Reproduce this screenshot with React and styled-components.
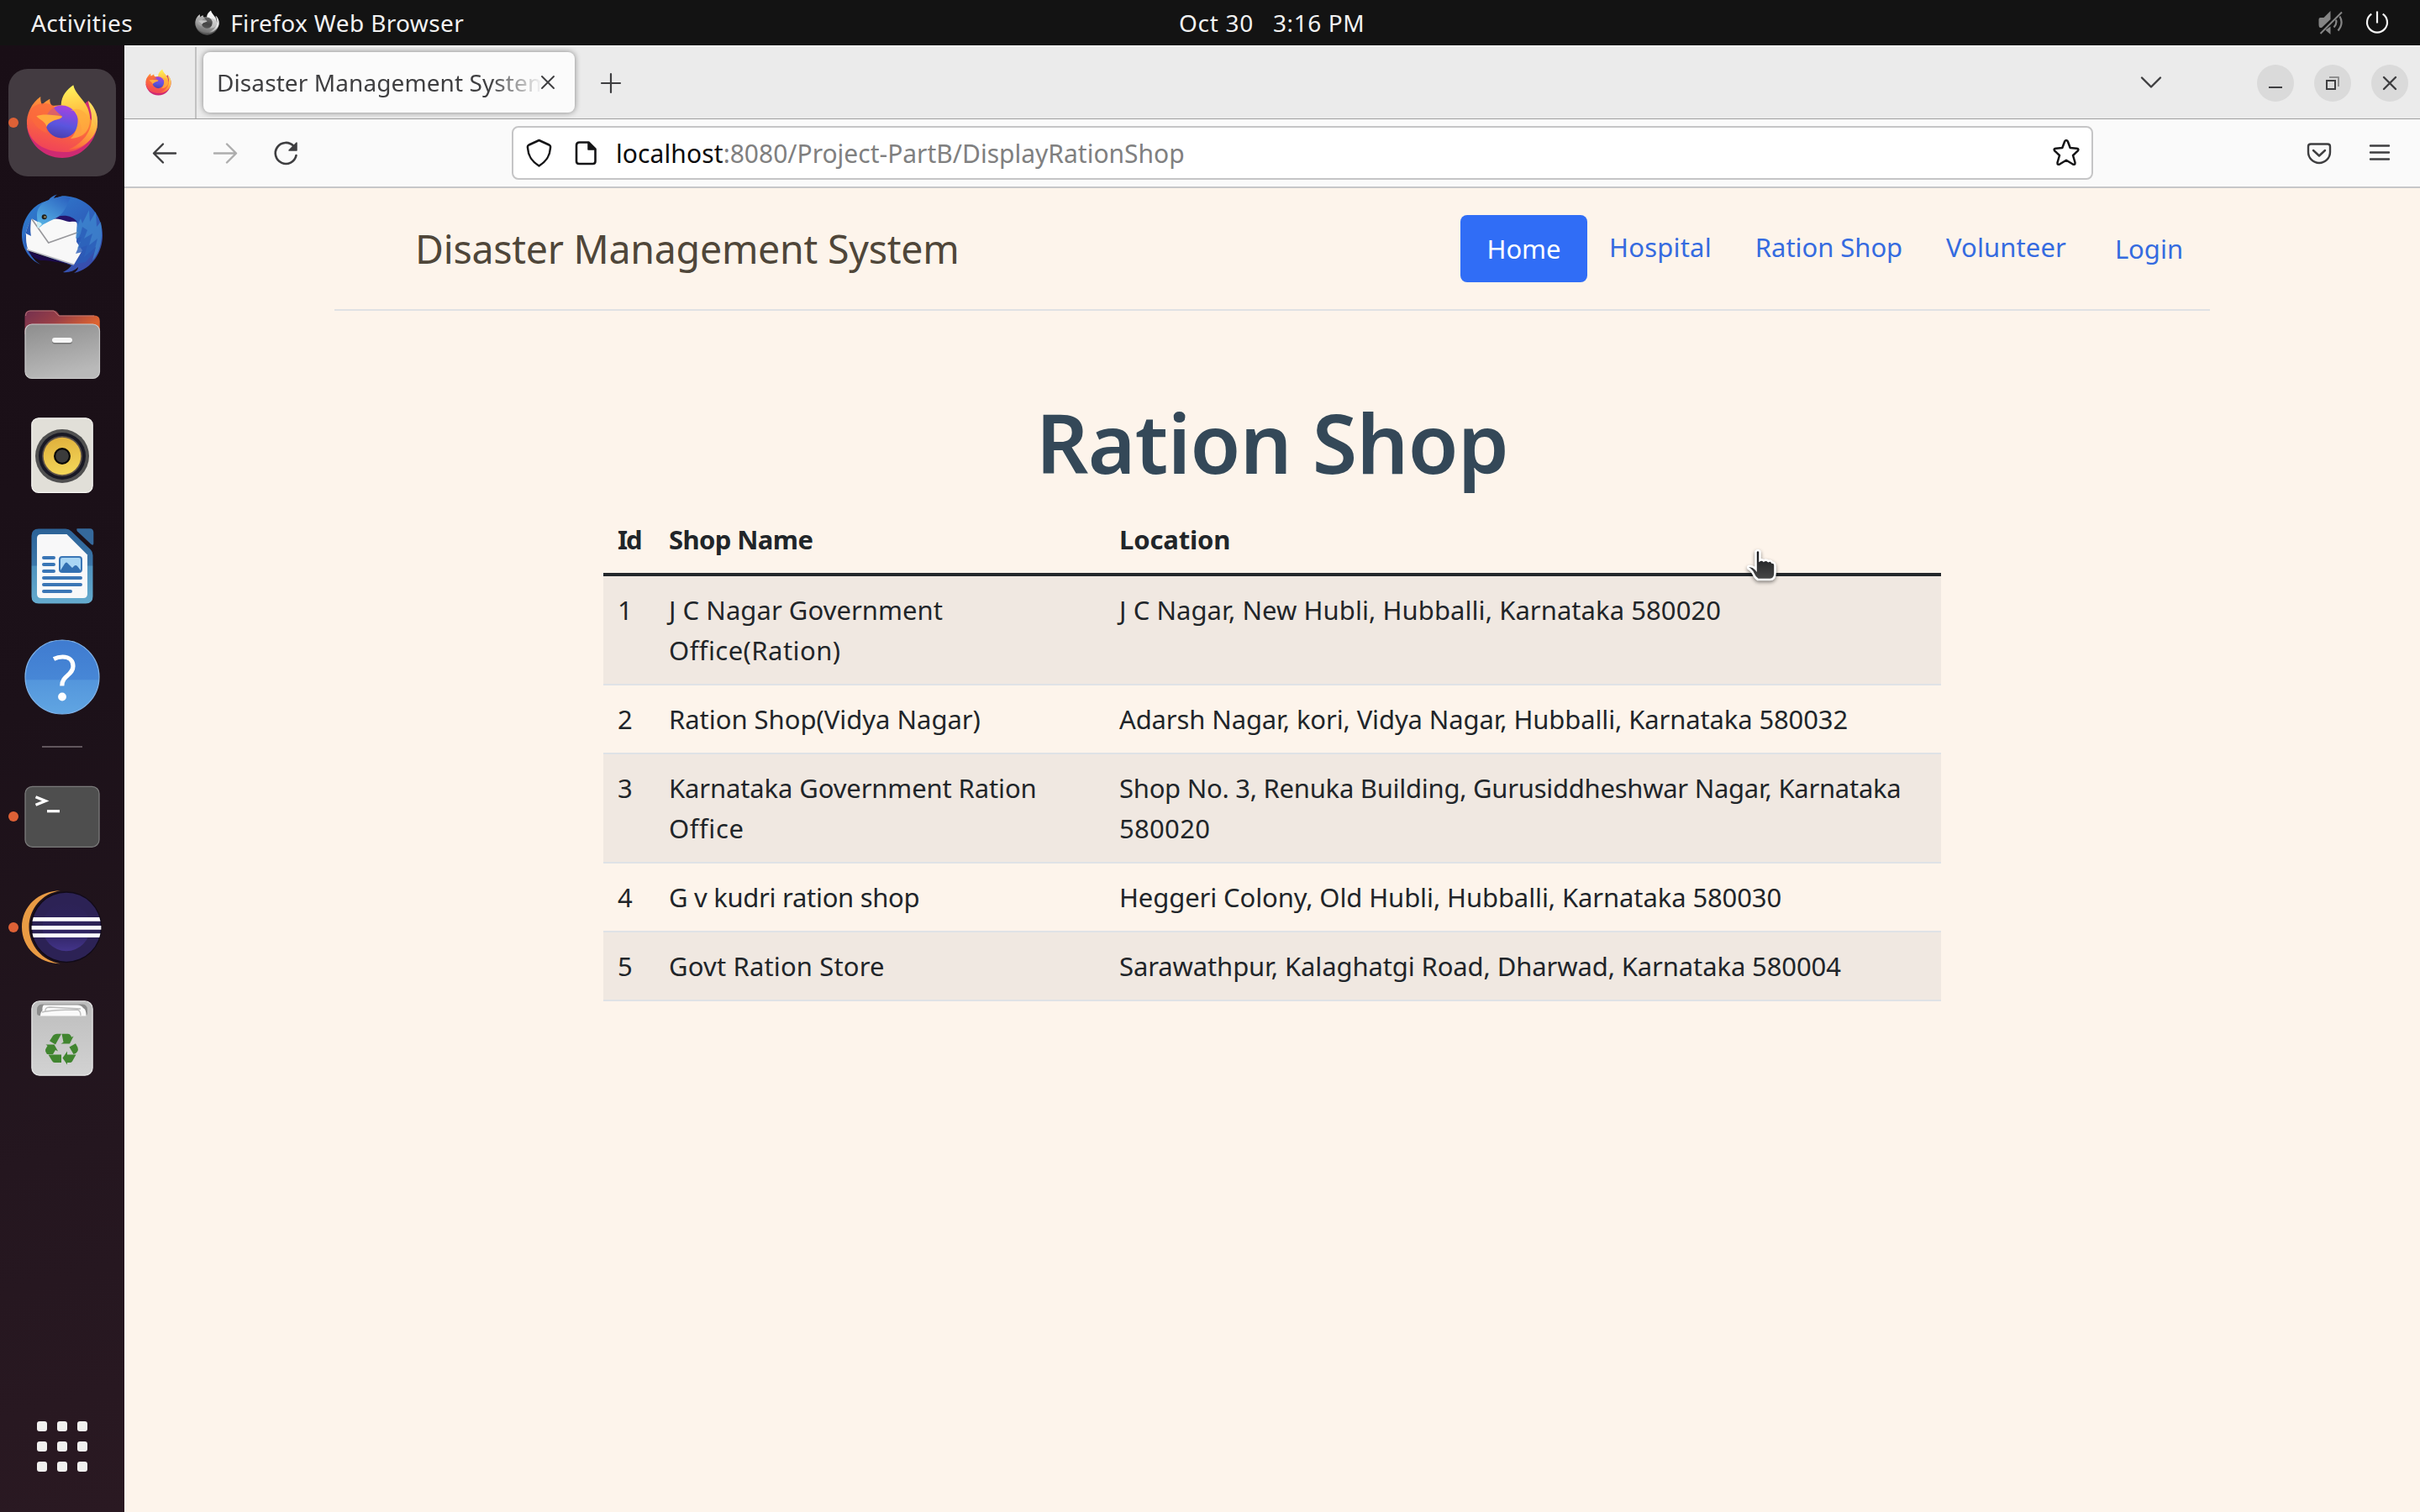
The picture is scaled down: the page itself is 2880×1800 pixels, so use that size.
import React from "react";
import styled, { createGlobalStyle } from "styled-components";

const GlobalStyle = createGlobalStyle`
  * { box-sizing: border-box; }
  html, body { margin: 0; padding: 0; }
  body {
    font-family: "Noto Sans", "Open Sans", sans-serif;
    background: #fdf4eb;
    overflow: hidden;
  }
  svg { display: block; flex: none; }
`;

/* ---------- desktop ---------- */

const Desktop = styled.div`
  width: 2880px;
  height: 1800px;
  display: flex;
  flex-direction: column;
  overflow: hidden;
`;

const TopBar = styled.header`
  flex: none;
  height: 54px;
  background: #131313;
  color: #f2f2f2;
  display: grid;
  grid-template-columns: 1403px auto 1fr;
  align-items: center;
  font-size: 28px;
  line-height: 50px;
  white-space: pre;
`;

const TopLeft = styled.div`
  display: flex;
  align-items: center;
  padding-left: 37px;
`;

const TopRight = styled.div`
  display: flex;
  align-items: center;
  justify-content: flex-end;
  gap: 26px;
  padding-right: 36px;
`;

const Clock = styled.div`
  display: flex;
  gap: 23px;
`;

const Tracked = styled.span`
  letter-spacing: ${(p) => p.$track || 0}px;
  white-space: nowrap;
`;

const ActiveApp = styled.div`
  display: flex;
  align-items: center;
  gap: 12px;
  margin-left: 73px;
`;

const Body = styled.div`
  flex: 1;
  display: flex;
  min-height: 0;
`;

/* ---------- dock ---------- */

const Dock = styled.nav`
  flex: none;
  width: 148px;
  padding: 28px 10px 14px;
  background: linear-gradient(165deg, #190e16 0%, #1c1119 45%, #24161f 75%, #2a1922 100%);
  display: flex;
  flex-direction: column;
  gap: 4px;
`;

const Tile = styled.div`
  position: relative;
  flex: none;
  width: 128px;
  height: 128px;
  border-radius: 23px;
  background: ${(p) => (p.$active ? "#433b41" : "transparent")};
  display: flex;
  align-items: center;
  justify-content: center;
`;

const RunningDot = styled.span`
  position: absolute;
  left: 0;
  top: 58px;
  width: 12px;
  height: 12px;
  border-radius: 50%;
  background: #dd6136;
`;

const DockDivider = styled.div`
  flex: none;
  height: 2px;
  width: 48px;
  margin: 14px auto;
  background: #61565d;
`;

const AppsGrid = styled.div`
  margin: auto auto 34px;
  display: grid;
  grid-template-columns: repeat(3, 12px);
  grid-auto-rows: 12px;
  gap: 12px;
`;

const AppsCell = styled.span`
  border-radius: 3px;
  background: #f1f0ef;
`;

/* ---------- browser ---------- */

const Browser = styled.main`
  flex: 1;
  display: flex;
  flex-direction: column;
  min-width: 0;
`;

const TabStrip = styled.div`
  flex: none;
  height: 88px;
  border-top: 2px solid #fcfcfc;
  border-bottom: 1px solid #9f9f9f;
  background: #ebebeb;
  color: #3f3f41;
  display: flex;
  align-items: stretch;
`;

const PinnedTab = styled.div`
  width: 86px;
  padding-left: 24px;
  border-right: 2px solid #c2c2c2;
  display: flex;
  align-items: center;
`;

const Tab = styled.div`
  width: 442px;
  height: 72px;
  margin: 6px 29px 0 8px;
  padding: 0 22px 0 16px;
  border-radius: 8px;
  background: #fbfbfb;
  box-shadow: 0 0 7px rgba(0, 0, 0, 0.45);
  display: flex;
  align-items: center;
  justify-content: space-between;
`;

const TabTitle = styled.div`
  width: 385px;
  margin-right: -2px;
  overflow: hidden;
  white-space: nowrap;
  font-size: 28px;
  line-height: 71px;
  letter-spacing: 0.09px;
  mask-image: linear-gradient(to right, #000 325px, transparent 388px);
`;

const NewTab = styled.div`
  display: flex;
  align-items: center;
`;

const TabControls = styled.div`
  margin-left: auto;
  display: flex;
  align-items: center;
`;

const WindowButtons = styled.div`
  display: flex;
  gap: 24px;
  margin: 0 14px 0 110px;
`;

const WindowButton = styled.div`
  width: 44px;
  height: 44px;
  border-radius: 50%;
  background: #dadada;
`;

const Toolbar = styled.div`
  flex: none;
  height: 82px;
  border-bottom: 2px solid #c6c7c9;
  background: #fafafa;
  display: flex;
  align-items: center;
`;

const NavButtons = styled.div`
  width: 461px;
  padding-left: 32px;
  display: flex;
  gap: 40px;
`;

const UrlBar = styled.div`
  width: 1882px;
  height: 64px;
  padding: 0 12px 0 13px;
  border: 2px solid #c5c5c6;
  border-radius: 8px;
  background: #fff;
  display: flex;
  align-items: center;
`;

const PageInfo = styled.span`
  margin: 0 20px 0 21px;
`;

const UrlText = styled.div`
  flex: 1;
  font-size: 30px;
  line-height: 59px;
  color: #808080;
  white-space: nowrap;
`;

const UrlHost = styled.span`
  color: #0a0a0c;
  letter-spacing: 0.1px;
`;

const ToolbarEnd = styled.div`
  margin-left: auto;
  padding-right: 32px;
  display: flex;
  gap: 38px;
`;

/* ---------- page ---------- */

const Page = styled.section`
  flex: 1;
  background: #fdf4eb;
  color: #212529;
  padding: 0 250px;
`;

const SiteHeader = styled.div`
  padding: 32px 0;
  border-bottom: 2px solid #dfe1e4;
  display: flex;
  justify-content: space-between;
`;

const Brand = styled.div`
  padding-left: 96px;
  font-size: 46.5px;
  line-height: 80px;
  letter-spacing: -0.26px;
  color: #4f4639;
`;

const SiteNav = styled.div`
  display: flex;
`;

const SiteLink = styled.a`
  width: ${(p) => p.$width}px;
  height: 80px;
  line-height: ${(p) => (p.$button ? 80 : 76)}px;
  border-radius: 8px;
  text-align: center;
  font-size: 31px;
  letter-spacing: ${(p) => p.$track || 0}px;
  color: ${(p) => (p.$active ? "#fff" : "#356be0")};
  background: ${(p) => (p.$active ? "#306df6" : "transparent")};
`;

const Title = styled.h1`
  margin: 96px 0 16px;
  font-size: 97px;
  font-weight: 570;
  line-height: 120px;
  letter-spacing: -0.6px;
  text-align: center;
  color: #344858;
`;

const Table = styled.div`
  width: 1592px;
  margin: 0 auto;
  font-size: 31px;
  line-height: 48px;
`;

const Row = styled.div`
  display: grid;
  grid-template-columns: 61px 536px 1fr;
  border-bottom: ${(p) => (p.$head ? "4px solid #23272a" : "2px solid #dfe2e6")};
  background: ${(p) => (p.$striped ? "#f0e8e1" : "transparent")};
  font-weight: ${(p) => (p.$head ? 700 : 400)};
`;

const Cell = styled.div`
  padding: 16px 0 16px 17px;
`;

const Line = styled.div`
  white-space: nowrap;
  letter-spacing: ${(p) => p.$track || 0}px;
`;

const Pointer = styled.svg`
  position: absolute;
  left: 2070px;
  top: 646px;
  filter: drop-shadow(0 2px 2px rgba(0, 0, 0, 0.45));
`;

/* ---------- icons ---------- */

const Firefox = ({ size, gray, id, box = "0 0 96 96" }) => {
  const c = gray
    ? { a: "#e9e9e9", b: "#a5a5a5", c: "#6b6b6b", d: "#555", g1: "#6a6a6a", g2: "#444", h1: "#fff", h2: "#b5b5b5", s: "#c5c5c5" }
    : { a: "#ffb13b", b: "#fb6a3c", c: "#f0425a", d: "#cf2a72", g1: "#a742e0", g2: "#5a55de", h1: "#fff45c", h2: "#fd8d33", s: "#ffac3e" };
  return (
    <svg width={size} height={size} viewBox={box}>
      <defs>
        <linearGradient id={id + "b"} x1="0.7" y1="0" x2="0.35" y2="1">
          <stop offset="0" stopColor={c.a} />
          <stop offset="0.5" stopColor={c.b} />
          <stop offset="1" stopColor={c.c} />
        </linearGradient>
        <linearGradient id={id + "f"} x1="0.4" y1="0" x2="0.5" y2="1">
          <stop offset="0" stopColor={c.h1} />
          <stop offset="0.65" stopColor={c.a} />
          <stop offset="1" stopColor={c.b} />
        </linearGradient>
        <linearGradient id={id + "t"} x1="0.6" y1="0" x2="0.2" y2="1">
          <stop offset="0" stopColor={c.h1} />
          <stop offset="0.5" stopColor={c.a} />
          <stop offset="1" stopColor={c.b} />
        </linearGradient>
        <linearGradient id={id + "g"} x1="0.6" y1="0" x2="0.4" y2="1">
          <stop offset="0" stopColor={c.g1} />
          <stop offset="0.6" stopColor={c.g2} />
          <stop offset="1" stopColor={gray ? "#555" : "#4b3fae"} />
        </linearGradient>
      </defs>
      <path d="M79 22 C88 31 91 42 90 50 C88 72 70 90 48 90 C26 90 8 73 6 52 L30 62 Z" fill={c.d} />
      <path d="M22.3 17 C22 20 22.5 24 24 27 C27 23 31 21 33.3 19.7 C33 23 34 26 36 28 L60 26 C72 34 80 40 88 52 C86 70 68 84 50 83 C28 83 8 72 6 50 C5 38 12 24 22.3 17Z" fill={`url(#${id}b)`} />
      <path d="M46.7 27 C47 16 54 8 61.3 3.3 C63 13 74 21 78 30 C84 44 82 58 70 66 C74 50 66 34 46.7 27Z" fill={`url(#${id}f)`} />
      <path d="M79 22 C89 31 91.500 44 89.500 54 C86 69 70 80 56 80 C72 73 84 58 83 42 C83 34 79.500 28 79 22Z" fill={`url(#${id}t)`} opacity="0.9" />
      <circle cx="47.500" cy="47" r="19.500" fill={`url(#${id}g)`} />
      <path d="M57 34.500 C60 32 64 34 66 38 C68 44 66 60 58 67 C74 66 82 56 80 44 C76 34 66 28 57 34.500Z" fill={c.s} opacity="0.8" />
      <path d="M9 34 C18 22 32 24 38 28 C38 33 44 37 48 40.500 C46 45 40 44 34 47 C30 49 28 54 30 60 C20 58 10 46 9 34Z" fill={c.b} opacity="0.75" />
      <path d="M17.300 40.300 C24 37 40 39 48 40.500 C47 44 41 43.500 36 46.500 C33 48 30 50 29.500 53 C28 47 22 45 17.300 40.300Z" fill={c.s} />
    </svg>
  );
};

const Thunderbird = () => (
  <svg width="96" height="96" viewBox="0 0 96 96">
    <defs>
      <linearGradient id="tb1" x1="0.1" y1="0" x2="0.9" y2="1">
        <stop offset="0" stopColor="#2f7fd0" />
        <stop offset="0.5" stopColor="#2e62bd" />
        <stop offset="1" stopColor="#3a48a8" />
      </linearGradient>
      <linearGradient id="tb2" x1="0.8" y1="0" x2="0.1" y2="1">
        <stop offset="0" stopColor="#2b62c0" />
        <stop offset="1" stopColor="#58b5e6" />
      </linearGradient>
    </defs>
    <path d="M48 3.300 C78 3.300 96 26 96 50 C96 70 84 90 62 95 C66 92 67 90 67 88 C62 93 55 95 49 94 C53 92 57 89 59 86 L8 68 C12 78 20 85 26 86 C10 82 0 66 0 50 C0 34 9 18 24 11 Z" fill="url(#tb1)" />
    <path d="M7 67.500 C12 71 28 76 59 85 C44 82 32 80 22 80 C16 78 10 74 7 67.500Z" fill="#1c0a4a" />
    <path d="M12 30.500 L24 36.700 C32 30 42 29 50 31 C58 33 64 32 65.700 36 L65 58 L72 68 L62 85 L6 67.300 L4 50 C6 42 8 36 12 30.500Z" fill="#f8f8f8" />
    <path d="M6.300 67.300 L62 85" stroke="#b9b9bd" strokeWidth="1.500" fill="none" />
    <path d="M12 31 L31.700 59 L67 46.500" stroke="#97979b" strokeWidth="1.600" fill="none" />
    <path d="M36 31 C46 24 60 26 66 34 C60 33 58 35 52 33 C46 31 42 30 36 31Z" fill="#25146c" />
    <path d="M42 1.500 C38 2.500 34 5 32 8 C24 11 18 17 18 26 C18 31 19 35 18.500 40 C20 41 21 41 22 40 C26 36 32 34 38 31 C50 26 54 14 58 5 C50 4 44 4 38 6 C39 4 40 3 42 1.500Z" fill="url(#tb2)" />
    <path d="M18.300 34 C18 37 18 40 19 42 L24 37 C22 34 20 34 18.300 34Z" fill="#cfeef3" />
    <path d="M65.700 40 L70 30 L72 36 L80 20 L81 34 L88 22 L89 40 L94 34 C96 48 96 66 84 80 L88 64 L74 76 L78 62 L66 66 L71 52 L64 54 Z" fill="#3f8bd2" opacity="0.7" />
    <path d="M72 40 L78 44 L74 54 L84 48 L80 62 L90 54 L86 70 L76 82 L64 84 L72 70 L64 72 L70 58 L65 58 L70 48 Z" fill="#2b5cb8" opacity="0.8" />
    <path d="M4 50 C6 42 8 36 11 31 C10 42 10 46 11 51 L5 48 C5 56 5 62 8 68 C2 60 2 56 4 50Z" fill="#2a5cb4" />
    <circle cx="26.700" cy="28.300" r="3" fill="#20201c" />
    <circle cx="27.500" cy="28.300" r="1.300" fill="#8f8660" />
  </svg>
);

const Files = () => (
  <svg width="96" height="96" viewBox="0 0 96 96">
    <defs>
      <linearGradient id="fl1" x1="0" y1="0" x2="1" y2="0.400">
        <stop offset="0" stopColor="#73304f" />
        <stop offset="0.500" stopColor="#9a3f46" />
        <stop offset="1" stopColor="#dd6330" />
      </linearGradient>
      <linearGradient id="fl2" x1="0" y1="0" x2="0.300" y2="1">
        <stop offset="0" stopColor="#8d8d8d" />
        <stop offset="1" stopColor="#b9b9b9" />
      </linearGradient>
    </defs>
    <path d="M3.500 36 V14 Q3.500 7.500 10 7.500 H38 Q41 7.500 42.500 10 L45 13.500 H86 Q92.800 13.500 92.800 20 V36 Z" fill="url(#fl1)" />
    <path d="M4.500 14 Q5 8 10 8 H38 L44 14 H86" stroke="#c0857f" strokeWidth="1" fill="none" opacity="0.800" />
    <rect x="4" y="24" width="88.500" height="64.500" rx="8" fill="url(#fl2)" stroke="#cdcdcd" strokeWidth="1.200" />
    <rect x="36" y="41.500" width="24" height="6" rx="3" fill="#757575" />
    <rect x="36" y="40" width="24" height="6" rx="3" fill="#f5f5f5" />
  </svg>
);

const Speaker = () => (
  <svg width="96" height="96" viewBox="0 0 96 96">
    <defs>
      <linearGradient id="sp1" x1="0" y1="0" x2="0.200" y2="1">
        <stop offset="0" stopColor="#dfae3a" />
        <stop offset="1" stopColor="#f2d457" />
      </linearGradient>
    </defs>
    <rect x="11.800" y="3.800" width="72.400" height="88.500" rx="8" fill="#e1dfd8" stroke="#f6f5f2" strokeWidth="1.200" />
    <circle cx="48" cy="49" r="32" fill="#505050" />
    <circle cx="48" cy="49" r="28" fill="#191925" />
    <circle cx="48" cy="49" r="24" fill="#5c5148" />
    <circle cx="48" cy="49" r="22.300" fill="url(#sp1)" />
    <circle cx="48" cy="49" r="10" fill="#060606" />
    <circle cx="48" cy="49" r="7.800" fill="#3b3b3b" />
  </svg>
);

const Writer = () => (
  <svg width="96" height="96" viewBox="0 0 96 96">
    <defs>
      <linearGradient id="wr1" x1="0" y1="0" x2="0" y2="1">
        <stop offset="0" stopColor="#2c6296" />
        <stop offset="0.490" stopColor="#3c78ab" />
        <stop offset="0.500" stopColor="#4f93bf" />
        <stop offset="1" stopColor="#65abce" />
      </linearGradient>
    </defs>
    <path d="M20 3.500 H52 Q56 3.500 59 6.500 L82 28.500 Q84.500 31 84.500 35 V84 Q84.500 92.500 76 92.500 H20 Q11.500 92.500 11.500 84 V12 Q11.500 3.500 20 3.500Z" fill="url(#wr1)" />
    <path d="M66 3.300 H81 Q85.300 3.300 85.300 8 V21 Q85.300 24 82.500 22 L66 6.500 Q64.500 3.500 66 3.300Z" fill="#35699c" />
    <path d="M23 10 H53.500 L78 34.500 V81 Q78 86 73 86 H23 Q18 86 18 81 V15 Q18 10 23 10Z" fill="#f8f8f9" />
    <path d="M26 38 H38 M26 46 H38 M26 54 H38 M26 62 H70 M26 70 H70 M26 78 H58" stroke="#3a76b6" strokeWidth="4" strokeLinecap="round" />
    <rect x="45" y="37" width="26" height="18" rx="3" fill="#a9d6f4" stroke="#3a76b6" strokeWidth="2" />
    <path d="M46 53 L51 45 Q53 42 55 45 L60 50 L62 48 Q64 46 66 48 L70 53 V55 H46Z" fill="#3270b2" />
  </svg>
);

const Help = () => (
  <svg width="96" height="96" viewBox="0 0 96 96">
    <defs>
      <linearGradient id="hp1" x1="0" y1="0" x2="0" y2="1">
        <stop offset="0" stopColor="#3f7bd0" />
        <stop offset="0.530" stopColor="#4787d6" />
        <stop offset="0.545" stopColor="#5496dc" />
        <stop offset="1" stopColor="#60a5e2" />
      </linearGradient>
    </defs>
    <circle cx="48" cy="48" r="44" fill="url(#hp1)" stroke="#7fb3ea" strokeWidth="1.200" />
    <path d="M38 26.500 Q43 24 48.500 24 C57 24 61 29 61 35 C61 46 47.500 46 47.800 58.500" stroke="#fff" strokeWidth="5.200" fill="none" />
    <circle cx="48" cy="71.500" r="4.900" fill="#fff" />
  </svg>
);

const Terminal = () => (
  <svg width="96" height="96" viewBox="0 0 96 96">
    <rect x="4" y="12.300" width="88" height="72" rx="8.500" fill="#4e4e4e" stroke="#7b7b7b" strokeWidth="1.300" />
    <path d="M16.500 24.800 L28 29.500 L16.500 34.200" stroke="#fff" strokeWidth="3.400" fill="none" />
    <path d="M30 41.700 H45" stroke="#fff" strokeWidth="3.200" />
  </svg>
);

const Eclipse = () => (
  <svg width="96" height="96" viewBox="0 0 96 96">
    <defs>
      <linearGradient id="ec1" x1="0" y1="0" x2="0" y2="1">
        <stop offset="0" stopColor="#2c2255" />
        <stop offset="0.600" stopColor="#2f2461" />
        <stop offset="1" stopColor="#43348a" />
      </linearGradient>
    </defs>
    <path d="M46 4.300 C20 4.500 0 23 0 47.800 C0 72 20 91.300 46 91.300 C24 88 8.500 69 8.500 47.800 C8.500 26 24 7.500 46 4.300Z" fill="#e99b44" />
    <circle cx="52.800" cy="47.700" r="42.500" fill="#110a18" />
    <circle cx="53" cy="47.700" r="41" fill="#2c2255" />
    <circle cx="53" cy="47.700" r="28.500" fill="url(#ec1)" />
    <path d="M13.700 36 H92.300 L93.500 40.700 H12.500Z M11.600 46 H94.400 V50.700 H11.600Z M12.500 55.300 H93.500 L92.300 60 H13.700Z" fill="#fbfbfd" />
  </svg>
);

const Trash = () => (
  <svg width="96" height="96" viewBox="0 0 96 96">
    <defs>
      <linearGradient id="tr1" x1="0" y1="0" x2="0" y2="1">
        <stop offset="0" stopColor="#bdbdbd" />
        <stop offset="1" stopColor="#d2d2d2" />
      </linearGradient>
    </defs>
    <rect x="11.900" y="3.900" width="72.200" height="88.300" rx="9" fill="url(#tr1)" stroke="#e6e6e6" strokeWidth="1.300" />
    <path d="M24 7.500 H72 Q78 8 78 14 V18 Q78 21 75 21 H21 Q18 21 18 18 V14 Q18 8 24 7.500Z" fill="#8c8c8c" />
    <path d="M26 8.500 H66 Q71 8.500 73 12 Q77 14 76.500 21.500 H22 Q22 17 24.500 15 Q24 10 26 8.500Z" fill="#fafafa" />
    <path d="M28 17 Q27 11 33 11 L70 13 M24 17 Q36 14 66 14 Q70 15 70 21" stroke="#bdbdbd" strokeWidth="1.300" fill="none" />
    <g fill="#418530">
      <path d="M39 43.500 Q40 42.700 42 42.700 H47 L40 55.500 L33 51.300 L37 45 Q38 43.700 39 43.500Z" />
      <path d="M47.500 42.700 H55 Q57 42.700 58 44.500 L59.200 46.700 L61.500 45.500 L57 54.500 H46.500 L49.500 52.700 Z" />
      <path d="M56.500 58.500 L64 54.200 L66.500 59 Q67.500 61.500 66 64 Q64 67 61.500 67 Z" />
      <path d="M64.500 67.500 L60 75.500 Q59 77 57 77 H54 V79.500 L48.500 71.500 L54 63.500 V67.500Z" />
      <path d="M47 67.500 V77 H39 Q37 77 36 75 L31.500 67.500Z" />
      <path d="M28.500 55.500 H38.500 L43 63.500 L40 62 L37 67 H30 Q27 63 28.500 60.500 L30.500 57Z" />
    </g>
  </svg>
);

const Mute = () => (
  <svg width="30" height="30" viewBox="0 0 30 30">
    <path d="M1.500 11 Q1.500 9 3.500 9 H7.500 L15.500 1 V11 L5 21 H3.500 Q1.500 21 1.500 17Z" fill="#858585" />
    <path d="M15.500 19.500 V29 L9.500 23.800Z" fill="#858585" />
    <path d="M3.500 28 L29 2.500" stroke="#858585" strokeWidth="2" />
    <path d="M22 11.500 Q23.500 16 19.500 20.500 M26.500 7.500 Q31.500 16 24.500 24.500" stroke="#858585" strokeWidth="2.200" fill="none" />
  </svg>
);

const Power = () => (
  <svg width="30" height="30" viewBox="0 0 30 30" fill="none" stroke="#f4f4f4" strokeWidth="2.200">
    <path d="M8.300 4.600 A12 12 0 1 0 21.700 4.600" />
    <path d="M15 1.500 V15.500" />
  </svg>
);

const Stroke = ({ w = 32, h = 32, color = "#3e3e40", sw = 2.4, children }) => (
  <svg width={w} height={h} viewBox={`0 0 ${w} ${h}`} fill="none" stroke={color} strokeWidth={sw} strokeLinecap="round" strokeLinejoin="round">
    {children}
  </svg>
);

const Hand = () => (
  <Pointer width="52" height="56" viewBox="0 0 52 56">
    <defs>
      <linearGradient id="hd1" x1="0" y1="0" x2="0" y2="1">
        <stop offset="0" stopColor="#15171b" />
        <stop offset="1" stopColor="#484848" />
      </linearGradient>
    </defs>
    <path
      d="M19.500 10.500 Q22 7.500 24.500 10.500 V21 Q27 19.500 29 21.500 Q32 19.500 34.500 22 Q37.500 20.500 39 23.500 Q43 23.500 42.500 29 V36 Q42.500 44 36.500 44 H22 Q18.500 42 16.500 37 Q14.500 32.500 10.500 30.500 Q9.500 28.500 11.500 28 Q16 27.500 19.500 31.500Z"
      fill="url(#hd1)"
      stroke="#fff"
      strokeWidth="2.600"
    />
  </Pointer>
);

/* ---------- data ---------- */

const dockTop = [
  { id: "firefox", icon: <Firefox size={96} id="ffd" />, active: true, running: true },
  { id: "mail", icon: <Thunderbird /> },
  { id: "files", icon: <Files /> },
  { id: "music", icon: <Speaker /> },
  { id: "writer", icon: <Writer /> },
  { id: "help", icon: <Help /> },
];

const dockBottom = [
  { id: "terminal", icon: <Terminal />, running: true },
  { id: "eclipse", icon: <Eclipse />, running: true },
  { id: "trash", icon: <Trash /> },
];

const links = [
  { label: "Home", width: 151, button: true, active: true, track: -0.1 },
  { label: "Hospital", width: 174, track: 0.2 },
  { label: "Ration Shop", width: 227, track: -0.05 },
  { label: "Volunteer", width: 195, track: 0.1 },
  { label: "Login", width: 145, button: true, track: 0 },
];

const shops = [
  { id: 1, name: [["J C Nagar Government", 0.04], ["Office(Ration)", 0.45]], place: [["J C Nagar, New Hubli, Hubballi, Karnataka 580020", 0.06]] },
  { id: 2, name: [["Ration Shop(Vidya Nagar)", -0.03]], place: [["Adarsh Nagar, kori, Vidya Nagar, Hubballi, Karnataka 580032", -0.13]] },
  { id: 3, name: [["Karnataka Government Ration", -0.13], ["Office", 0.6]], place: [["Shop No. 3, Renuka Building, Gurusiddheshwar Nagar, Karnataka", -0.27], ["580020", 0.3]] },
  { id: 4, name: [["G v kudri ration shop", -0.3]], place: [["Heggeri Colony, Old Hubli, Hubballi, Karnataka 580030", -0.11]] },
  { id: 5, name: [["Govt Ration Store", 0.15]], place: [["Sarawathpur, Kalaghatgi Road, Dharwad, Karnataka 580004", -0.12]] },
];

const DockItem = ({ item }) => (
  <Tile $active={item.active}>
    {item.running && <RunningDot />}
    {item.icon}
  </Tile>
);

const Lines = ({ lines }) => (
  <Cell>
    {lines.map(([text, track]) => (
      <Line key={text} $track={track}>{text}</Line>
    ))}
  </Cell>
);

export default function App() {
  return (
    <Desktop>
      <GlobalStyle />
      <TopBar>
        <TopLeft>
          <Tracked $track={0.45}>Activities</Tracked>
          <ActiveApp>
            <Firefox size={31} id="fft" gray box="2 2 92 92" />
            <Tracked $track={0.38}>Firefox Web Browser</Tracked>
          </ActiveApp>
        </TopLeft>
        <Clock>
          <Tracked $track={0.7}>Oct 30</Tracked>
          <Tracked $track={0.6}>3:16 PM</Tracked>
        </Clock>
        <TopRight>
          <Mute />
          <Power />
        </TopRight>
      </TopBar>
      <Body>
        <Dock>
          {dockTop.map((d) => <DockItem key={d.id} item={d} />)}
          <DockDivider />
          {dockBottom.map((d) => <DockItem key={d.id} item={d} />)}
          <AppsGrid>
            {Array.from({ length: 9 }, (_, i) => <AppsCell key={i} />)}
          </AppsGrid>
        </Dock>
        <Browser>
          <TabStrip>
            <PinnedTab>
              <Firefox size={33} id="ffp" box="2 2 92 92" />
            </PinnedTab>
            <Tab>
              <TabTitle>Disaster Management System</TabTitle>
              <Stroke w={20} h={20} sw={1.9}>
                <path d="M3 3 L17 17 M17 3 L3 17" />
              </Stroke>
            </Tab>
            <NewTab>
              <Stroke w={28} h={28} sw={2.2}>
                <path d="M14 3 V25 M3 14 H25" />
              </Stroke>
            </NewTab>
            <TabControls>
              <Stroke w={32} h={32} sw={2.4}>
                <path d="M5 9.500 L16 20.500 L27 9.500" />
              </Stroke>
              <WindowButtons>
                <WindowButton>
                  <Stroke w={44} h={44} sw={2}>
                    <path d="M15 27 H29" strokeLinecap="square" />
                  </Stroke>
                </WindowButton>
                <WindowButton>
                  <Stroke w={44} h={44} sw={2}>
                    <path d="M19 15 H29 V25" stroke="#8f8f8f" strokeLinecap="square" />
                    <rect x="15" y="19" width="10" height="10" strokeLinejoin="miter" />
                  </Stroke>
                </WindowButton>
                <WindowButton>
                  <Stroke w={44} h={44} sw={2.4}>
                    <path d="M15 15 L29 29 M29 15 L15 29" />
                  </Stroke>
                </WindowButton>
              </WindowButtons>
            </TabControls>
          </TabStrip>
          <Toolbar>
            <NavButtons>
              <Stroke><path d="M29 17.500 H3.500 M14 6.500 L3 17.500 L14 28.500" /></Stroke>
              <Stroke color="#adadad"><path d="M3 17.500 H28.500 M18 6.500 L29 17.500 L18 28.500" /></Stroke>
              <Stroke sw={2.6} h={34}>
                <path d="M28.500 20 A12.500 12.500 0 1 1 25.500 9" />
                <path d="M29 5 V14 H20Z" fill="#3e3e40" strokeWidth="1.500" />
              </Stroke>
            </NavButtons>
            <UrlBar>
              <Stroke w={36} h={36} color="#151517" sw={2.5}>
                <path d="M17.500 3 L29.500 8.500 Q31.500 9.500 31 12 C30.500 20 28 27 17.500 33.500 C7 27 4.500 20 4 12 Q3.500 9.500 5.500 8.500 Z" />
              </Stroke>
              <PageInfo>
                <Stroke w={32} h={32} color="#151517" sw={2.6}>
                  <path d="M8.500 3.500 H19.500 L27.500 11.500 V26 Q27.500 29 24.500 29 H8 Q5 29 5 26 V7 Q5 3.500 8.500 3.500Z" />
                  <path d="M19 3.500 V12 H27.500Z" fill="#151517" strokeWidth="1.500" />
                </Stroke>
              </PageInfo>
              <UrlText>
                <UrlHost>localhost</UrlHost>:8080/Project-PartB/DisplayRationShop
              </UrlText>
              <Stroke w={36} h={36} color="#151517" sw={2.5}>
                <path d="M16.200 4.300 Q18 1.800 19.800 4.300 L22.700 12 L30.500 12.700 Q33.600 13.200 31.700 15.700 L26 21 L28.500 29.500 Q28.700 32.800 25.500 31.300 L18 26.800 L10.500 31.300 Q7.300 32.800 7.500 29.500 L10 21 L4.300 15.700 Q2.400 13.200 5.500 12.700 L13.300 12 Z" />
              </Stroke>
            </UrlBar>
            <ToolbarEnd>
              <Stroke w={36} h={32}>
                <path d="M8 5.500 H28 Q31 5.500 31 8.500 V15 A13 13 0 0 1 5 15 V8.500 Q5 5.500 8 5.500Z" />
                <path d="M11 13 L18 19.500 L25 13" />
              </Stroke>
              <Stroke w={32} h={32}>
                <path d="M5 7.500 H27 M5 15.500 H27 M5 23.500 H27" />
              </Stroke>
            </ToolbarEnd>
          </Toolbar>
          <Page>
            <SiteHeader>
              <Brand>Disaster Management System</Brand>
              <SiteNav>
                {links.map((l) => (
                  <SiteLink key={l.label} $width={l.width} $button={l.button} $active={l.active} $track={l.track}>
                    {l.label}
                  </SiteLink>
                ))}
              </SiteNav>
            </SiteHeader>
            <Title>Ration Shop</Title>
            <Table>
              <Row $head>
                <Lines lines={[["Id", -2]]} />
                <Lines lines={[["Shop Name", -0.6]]} />
                <Lines lines={[["Location", -0.15]]} />
              </Row>
              {shops.map((s, i) => (
                <Row key={s.id} $striped={i % 2 === 0}>
                  <Cell>{s.id}</Cell>
                  <Lines lines={s.name} />
                  <Lines lines={s.place} />
                </Row>
              ))}
            </Table>
          </Page>
        </Browser>
      </Body>
      <Hand />
    </Desktop>
  );
}
